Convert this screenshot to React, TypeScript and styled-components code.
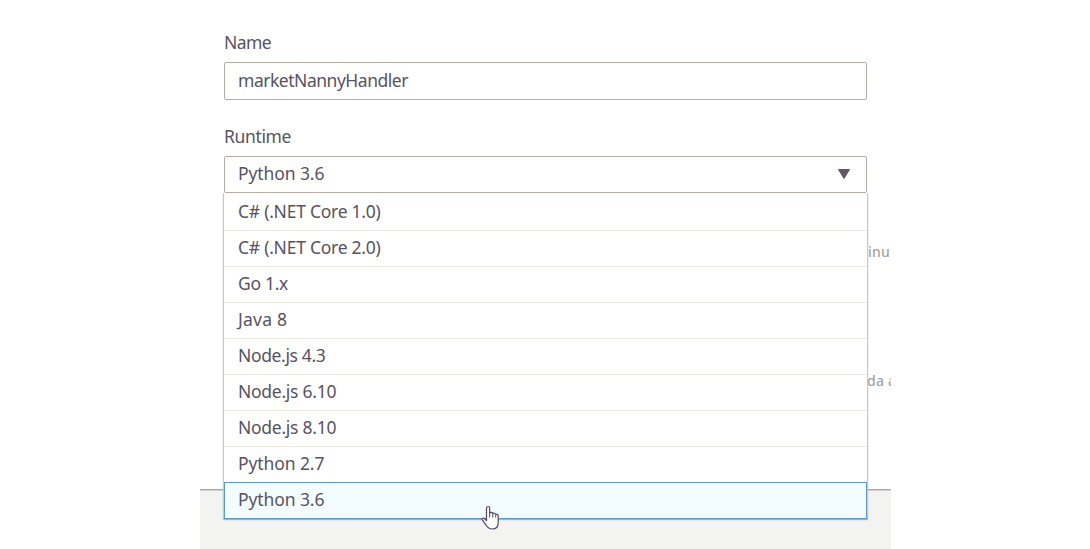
import React from "react";
import styled, { createGlobalStyle, css } from "styled-components";

const GlobalStyle = createGlobalStyle`
  * { box-sizing: border-box; }
  body {
    margin: 0;
    background: #fff;
    overflow: hidden;
    font-family: "Noto Sans", "Open Sans", sans-serif;
    font-size: 17.5px;
    color: #58535f;
  }
`;

const Page = styled.main`
  display: flex;
  flex-direction: column;
  width: 691px;
  height: 549px;
  margin-left: 200px;
  overflow: hidden;
`;

const Form = styled.form`
  flex: 0 0 489px;
  padding: 30px 24px 0;
`;

const Label = styled.label`
  display: block;
  height: 24px;
  line-height: 24px;
  margin-bottom: 8px;
`;

const Text = styled.span<{ $spacing: number }>`
  line-height: 24px;
  letter-spacing: ${(p) => p.$spacing}px;
  white-space: nowrap;
`;

const control = css`
  display: flex;
  align-items: center;
  border: 1px solid #b7aba2;
  border-radius: 2px;
  background: #fff;
  padding: 0 15px 2px 13px;
`;

const NameField = styled.div`
  ${control}
  height: 38px;
  margin-bottom: 24px;
`;

const Select = styled.div`
  position: relative;
`;

const SelectTrigger = styled.div`
  ${control}
  height: 37px;
  padding-bottom: 3px;
  justify-content: space-between;
`;

const Menu = styled.ul`
  position: absolute;
  top: 37px;
  left: -1px;
  right: -1px;
  z-index: 1;
  margin: 0;
  padding: 2px 0 0;
  list-style: none;
  background: #fff;
  border: solid #c3cbd0;
  border-width: 0 1px;
  box-shadow: 0 1px 1px #b2aeaa;
`;

const Option = styled.li<{ $active: boolean }>`
  display: flex;
  align-items: center;
  height: 36px;
  padding: 0 13px 3px 14px;
  border-bottom: 1px solid #ebebe4;
  ${(p) =>
    p.$active &&
    css`
      height: 37px;
      margin-top: -1px;
      padding: 0 13px 3px;
      background: #f3fcff;
      border: 1px solid #5a9bcb;
    `}
`;

const Hint = styled.p<{ $offset: number; $gap: number }>`
  margin: ${(p) => p.$gap}px -24px 0 0;
  padding-left: ${(p) => p.$offset}px;
  height: 20px;
  line-height: 20px;
  font-size: 14px;
  font-weight: 500;
  letter-spacing: 0.2px;
  color: #a5a3a4;
  white-space: nowrap;
  overflow: hidden;
`;

const Footer = styled.footer`
  flex: 1;
  background: #f3f4f2;
  border-top: 1px solid #aaa9a8;
  box-shadow: inset 0 1px #d2d1cf;
`;

const Cursor = styled.svg`
  position: absolute;
  left: 481px;
  top: 505px;
  z-index: 2;
`;

const options: [string, number][] = [
  ["C# (.NET Core 1.0)", -0.25],
  ["C# (.NET Core 2.0)", -0.25],
  ["Go 1.x", -0.3],
  ["Java 8", 0.25],
  ["Node.js 4.3", -0.35],
  ["Node.js 6.10", -0.27],
  ["Node.js 8.10", -0.27],
  ["Python 2.7", -0.1],
  ["Python 3.6", -0.1],
];

export default function App() {
  return (
    <>
      <GlobalStyle />
      <Page>
        <Form>
          <Label><Text $spacing={-0.6}>Name</Text></Label>
          <NameField><Text $spacing={-0.48}>marketNannyHandler</Text></NameField>
          <Label><Text $spacing={-0.35}>Runtime</Text></Label>
          <Select>
            <SelectTrigger>
              <Text $spacing={-0.1}>Python 3.6</Text>
              <svg width="14" height="11" viewBox="0 0 14 11">
                <path d="M1.5 1.5H12.5L7 10.5Z" fill="#645762" stroke="#645762" strokeLinejoin="round" />
              </svg>
            </SelectTrigger>
            <Menu>
              {options.map(([name, spacing]) => (
                <Option key={name} $active={name === "Python 3.6"}>
                  <Text $spacing={spacing}>{name}</Text>
                </Option>
              ))}
            </Menu>
          </Select>
          <Hint $gap={49} $offset={644}>inu</Hint>
          <Hint $gap={109} $offset={643}>da a</Hint>
        </Form>
        <Footer />
      </Page>
      <Cursor width="19" height="26" viewBox="0 0 19 26">
        <path
          d="M5.5 15.5V3.2C5.5 .9 8.7 .9 8.7 3.2V8.2C9.7 6.9 11.5 7.3 11.8 8.6C12.8 7.8 14.3 8.2 14.7 9.4C15.8 8.8 17.2 9.5 17.2 11V17.5C17.2 21.6 14.8 24 11.3 24C8.4 24 6.7 22.8 5.2 20.3L1.3 14.9C.5 13.6 1.8 12.6 3 13.3Z"
          fill="#fff" stroke="#51475a" strokeWidth="1.2" strokeLinejoin="round"
        />
        <path d="M8.7 8V12.5M11.8 8.7V12.5M14.7 9.5V12.5" fill="none" stroke="#51475a" />
      </Cursor>
    </>
  );
}
